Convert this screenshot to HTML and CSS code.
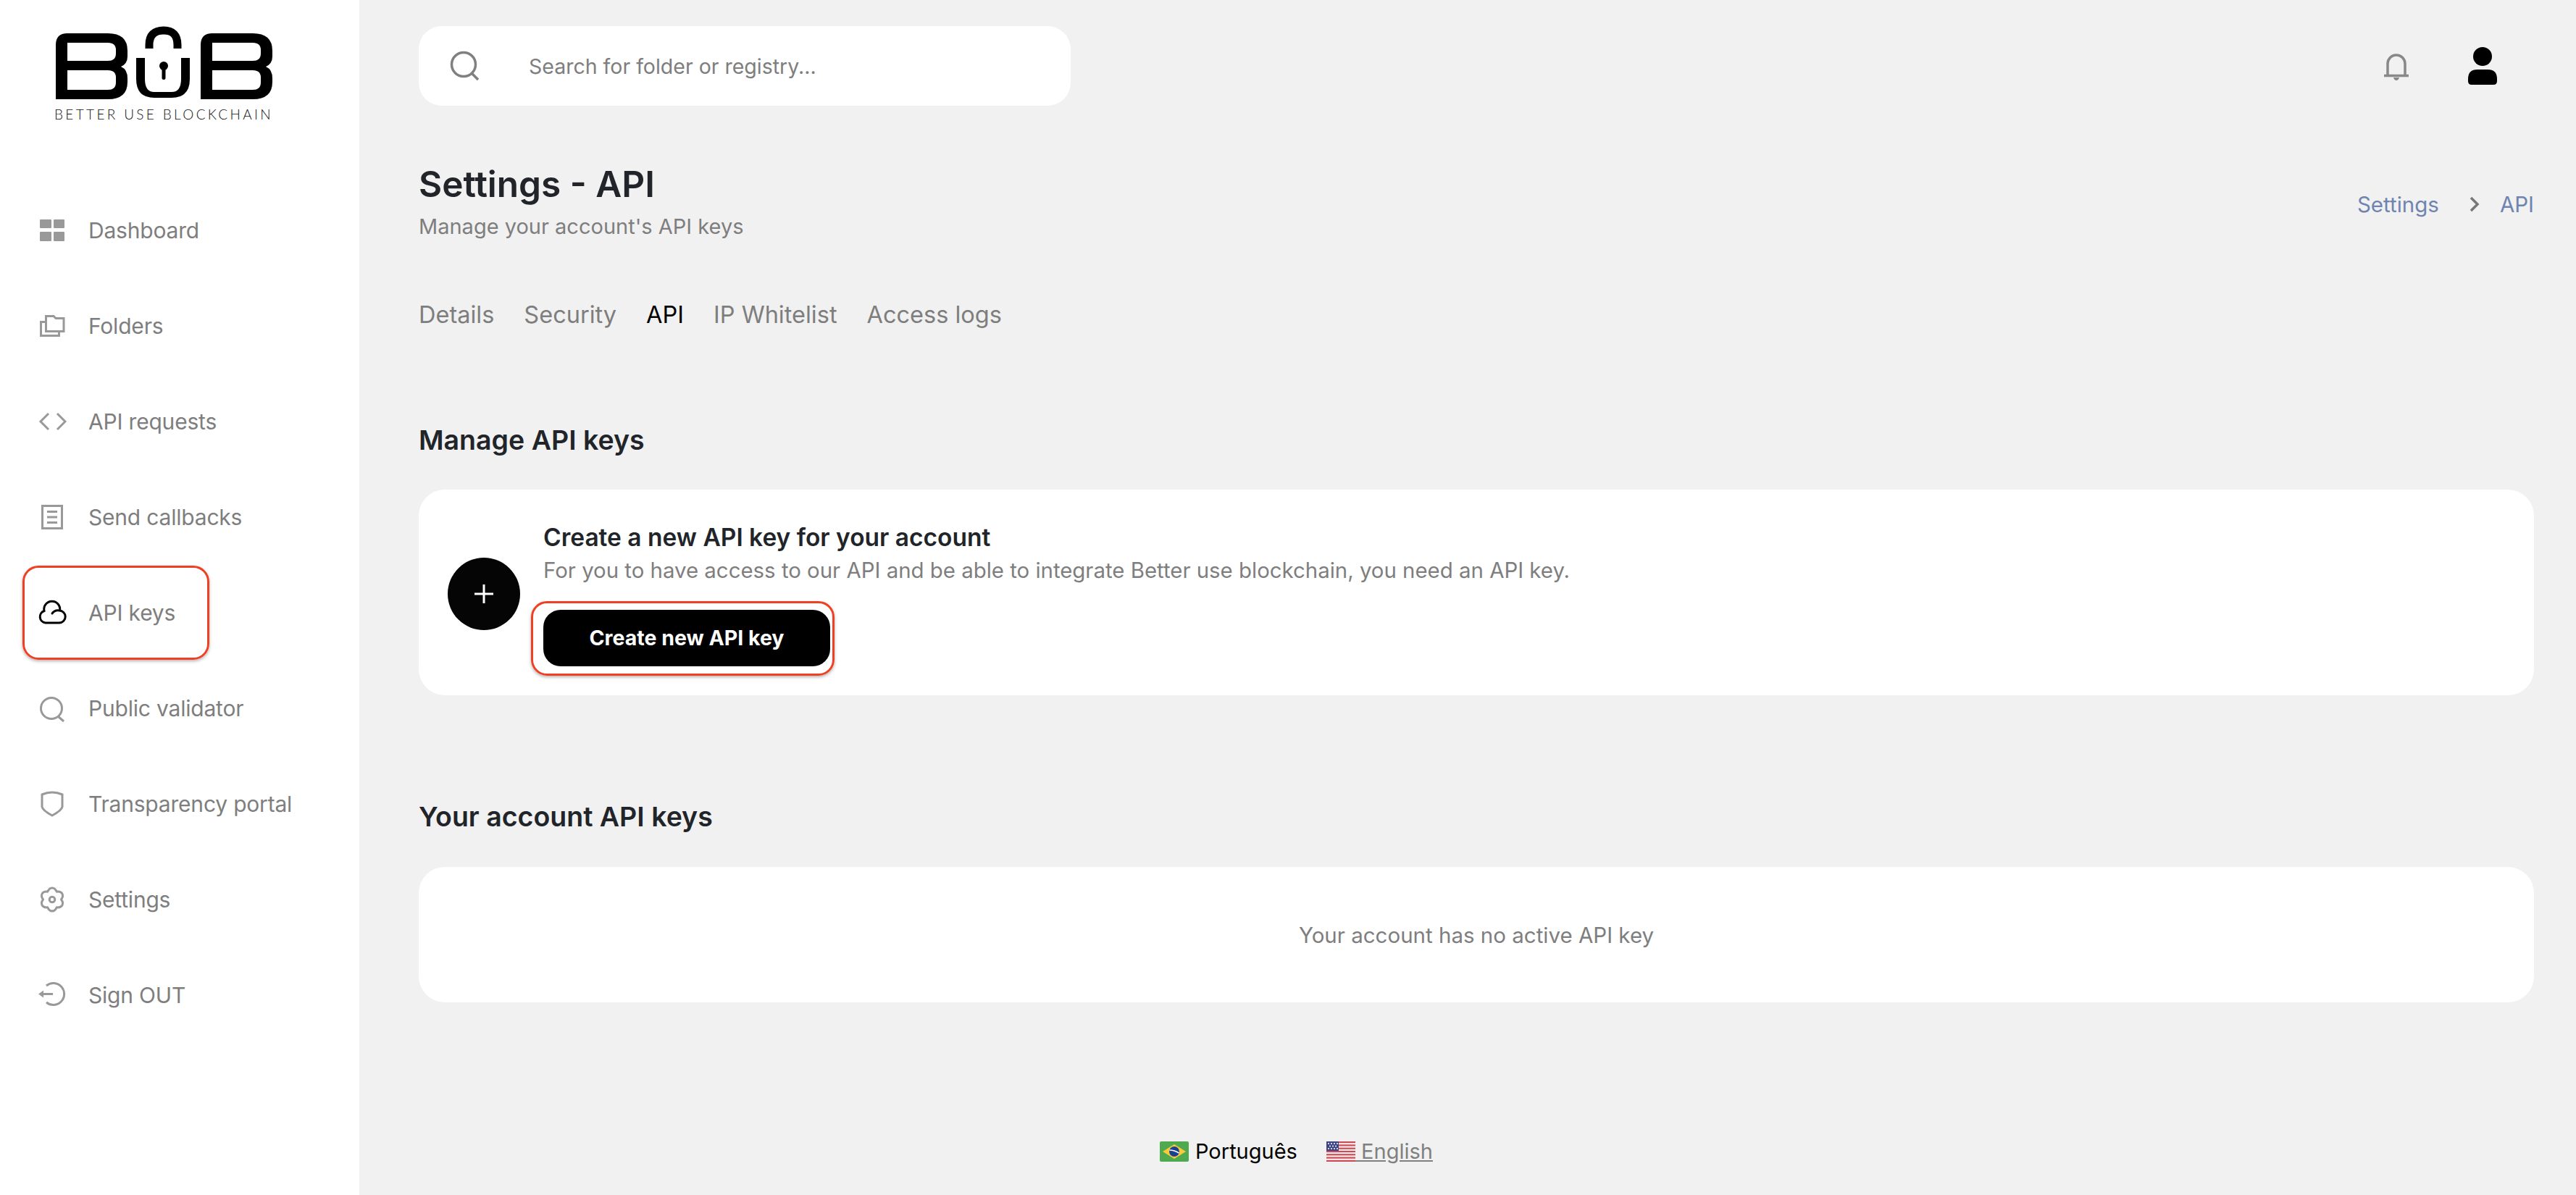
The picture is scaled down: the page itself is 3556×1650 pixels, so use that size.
FILE: index.html
```html
<!DOCTYPE html>
<html lang="en">
<head>
<meta charset="utf-8">
<title>Settings - API</title>
<link rel="stylesheet" href="styles.css">
</head>
<body>
<div class="app">
  <aside class="sidebar">
    <div class="brand">
      <svg class="brand-mark" viewBox="0 0 300 92" width="300" height="92" aria-hidden="true">
        <path fill-rule="evenodd" d="M0 91V16Q0 0 16 0H72Q99 0 99 24V32Q99 42 90 46Q99 50 99 62V67Q99 91 72 91ZM16 13V38H72Q83 38 83 28V23Q83 13 72 13ZM16 51V78H72Q83 78 83 68V61Q83 51 72 51Z"/>
        <path fill-rule="evenodd" transform="translate(200 0)" d="M0 91V16Q0 0 16 0H72Q99 0 99 24V32Q99 42 90 46Q99 50 99 62V67Q99 91 72 91ZM16 13V38H72Q83 38 83 28V23Q83 13 72 13ZM16 51V78H72Q83 78 83 68V61Q83 51 72 51Z"/>
        <path fill="none" stroke="#000" stroke-width="11" d="M129 21V16Q129 -4 149 -4Q168 -4 168 16V21"/>
        <path d="M111 34H123V63Q123 81 136 81H160Q173 81 173 63V34H185V63Q185 89 160 89H136Q111 89 111 63Z"/>
        <circle cx="149" cy="45" r="6"/>
        <rect x="146.500" y="45" width="5" height="19" rx="2.500"/>
      </svg>
      <span class="brand-tag">BETTER USE BLOCKCHAIN</span>
    </div>
    <nav class="nav">
      <a class="nav-item">
        <svg class="nav-icon" viewBox="0 0 40 40"><g class="fill"><rect x="3" y="5" width="16" height="12" rx="1"/><rect x="22" y="5" width="15" height="12" rx="1"/><rect x="3" y="22" width="16" height="13" rx="1"/><rect x="22" y="22" width="15" height="13" rx="1"/></g></svg>
        <span>Dashboard</span>
      </a>
      <a class="nav-item">
        <svg class="nav-icon" viewBox="0 0 40 40"><path d="M11.500 27.500V6.500H22L25 9.500H36V27.500Z"/><path d="M11 14.500H4.500V33.500H29.500V27"/></svg>
        <span>Folders</span>
      </a>
      <a class="nav-item">
        <svg class="nav-icon" viewBox="0 0 40 40"><path d="M15 9L4 20L15 31M27 9L38 20L27 31"/></svg>
        <span>API requests</span>
      </a>
      <a class="nav-item">
        <svg class="nav-icon" viewBox="0 0 40 40"><rect x="6.500" y="4.500" width="27" height="31"/><path d="M13 12.500H27M13 20H27M13 27.500H27"/></svg>
        <span>Send callbacks</span>
      </a>
      <a class="nav-item nav-item-marked">
        <svg class="nav-icon nav-icon-active" viewBox="0 0 40 40"><path d="M20 21A10 10 0 0 1 29.700 17A8.500 8.500 0 0 1 29.700 34H10.700A8.500 8.500 0 0 1 9 17.500A11 11 0 1 1 30.600 17"/></svg>
        <span>API keys</span>
      </a>
      <a class="nav-item">
        <svg class="nav-icon" viewBox="0 0 40 40"><circle cx="19" cy="20" r="14.500"/><path d="M28 31L36 38"/></svg>
        <span>Public validator</span>
      </a>
      <a class="nav-item">
        <svg class="nav-icon" viewBox="0 0 40 40"><path d="M6 7Q20 1 34 7V24Q33 29 20 36Q7 29 6 24Z"/></svg>
        <span>Transparency portal</span>
      </a>
      <a class="nav-item">
        <svg class="nav-icon nav-icon-round" viewBox="0 0 40 40"><path d="M13.750 9.200Q16 4 20 4Q24 4 26.250 9.200Q31.860 8.540 33.860 12Q35.860 15.460 32.500 20Q35.860 24.540 33.860 28Q31.860 31.460 26.250 30.800Q24 36 20 36Q16 36 13.750 30.800Q8.140 31.460 6.140 28Q4.140 24.540 7.500 20Q4.140 15.460 6.140 12Q8.140 8.540 13.750 9.200Z"/><circle cx="20" cy="20" r="3.800"/></svg>
        <span>Settings</span>
      </a>
      <a class="nav-item">
        <svg class="nav-icon" viewBox="0 0 40 40"><path d="M12 7A15 15 0 1 1 12 30M7 18.500H21"/><path class="fill" d="M1 18.500L8 13.500V23.500Z"/></svg>
        <span>Sign OUT</span>
      </a>
    </nav>
  </aside>

  <main class="main">
    <header class="topbar">
      <div class="search">
        <svg class="search-icon" viewBox="0 0 44 44"><circle cx="20" cy="20" r="16.500"/><path d="M31 32L40 41"/></svg>
        <span class="search-text">Search for folder or registry...</span>
      </div>
      <div class="top-actions">
        <svg class="bell" viewBox="0 0 36 38"><path d="M6 31V15A12 12 0 0 1 30 15V31M1 31.500H35"/><path class="bell-clapper" d="M14 34H22Q21 38 18 38Q15 38 14 34Z"/></svg>
        <svg class="user" viewBox="0 0 42 52"><circle cx="21" cy="13" r="13"/><path d="M14 31H28Q41 31 41 44V47Q41 52 36 52H6Q1 52 1 47V44Q1 31 14 31Z"/></svg>
      </div>
    </header>

    <section class="page-head">
      <div>
        <h1 class="page-title">Settings - API</h1>
        <p class="page-sub">Manage your account's API keys</p>
      </div>
      <div class="crumbs">
        <span>Settings</span>
        <svg class="crumb-sep" viewBox="0 0 14 22"><path d="M2 2L11 11L2 20"/></svg>
        <span>API</span>
      </div>
    </section>

    <nav class="tabs">
      <a class="tab">Details</a>
      <a class="tab">Security</a>
      <a class="tab tab-active">API</a>
      <a class="tab">IP Whitelist</a>
      <a class="tab">Access logs</a>
    </nav>

    <h2 class="section-title section-first">Manage API keys</h2>
    <section class="card card-create">
      <div class="plus-badge"><svg viewBox="0 0 28 28" width="28" height="28"><path d="M14 1V27M1 14H27"/></svg></div>
      <div class="create-body">
        <h3 class="create-title">Create a new API key for your account</h3>
        <p class="create-desc">For you to have access to our API and be able to integrate Better use blockchain, you need an API key.</p>
        <div class="btn-wrap"><button class="btn">Create new API key</button></div>
      </div>
    </section>

    <h2 class="section-title section-second">Your account API keys</h2>
    <section class="card card-empty">Your account has no active API key</section>

    <footer class="langs">
      <a class="lang lang-current">
        <svg class="flag" viewBox="0 0 40 28"><rect width="40" height="28" rx="2" fill="#4fa94f"/><path d="M20 4L36 14L20 24L4 14Z" fill="#f6cb3c"/><circle cx="20" cy="14" r="7" fill="#1d3f8f"/><path d="M13.500 12Q20 12 26.500 16" stroke="#fff" stroke-width="1.500" fill="none"/></svg>
        Português
      </a>
      <a class="lang lang-other">
        <svg class="flag" viewBox="0 0 40 28"><rect width="40" height="28" rx="2" fill="#f4f4f4"/><g fill="#cf4a55"><rect y="0" width="40" height="2.200"/><rect y="4.300" width="40" height="2.200"/><rect y="8.600" width="40" height="2.200"/><rect y="12.900" width="40" height="2.200"/><rect y="17.200" width="40" height="2.200"/><rect y="21.500" width="40" height="2.200"/><rect y="25.800" width="40" height="2.200"/></g><rect width="17" height="13" fill="#3d4583"/><g fill="#fff"><circle cx="3" cy="3" r="1"/><circle cx="7" cy="3" r="1"/><circle cx="11" cy="3" r="1"/><circle cx="15" cy="3" r="1"/><circle cx="5" cy="6.500" r="1"/><circle cx="9" cy="6.500" r="1"/><circle cx="13" cy="6.500" r="1"/><circle cx="3" cy="10" r="1"/><circle cx="7" cy="10" r="1"/><circle cx="11" cy="10" r="1"/><circle cx="15" cy="10" r="1"/></g></svg>
        <span class="lang-link">&nbsp;English</span>
      </a>
    </footer>
  </main>
</div>
</body>
</html>
```
FILE: styles.css
```css
*, *::after { box-sizing: border-box; }
html, body { margin: 0; padding: 0; }
body {
  background: #f1f1f1;
  color: #7e7e7e;
  font-family: "Inter", "Open Sans", sans-serif;
  font-size: 30px;
}
h1, h2, h3, p { margin: 0; }

.app { display: flex; min-height: 1650px; }

.sidebar { width: 496px; flex: none; background: #fff; }
.brand { height: 252px; padding: 46px 0 0 77px; display: flex; flex-direction: column; }
.brand-mark { display: block; overflow: visible; }
.brand-tag {
  margin-top: 8px;
  margin-left: -2px;
  font-family: "Lato", sans-serif;
  font-weight: 300;
  font-size: 19px;
  line-height: 24px;
  letter-spacing: 3.350px;
  color: #111;
  white-space: nowrap;
}

.nav { display: flex; flex-direction: column; }
.nav-item {
  position: relative;
  height: 132px;
  padding-left: 52px;
  display: flex;
  align-items: center;
  gap: 30px;
  line-height: 44px;
  letter-spacing: -0.2px;
  color: #7e7e7e;
}
.nav-icon {
  width: 40px;
  height: 40px;
  flex: none;
  fill: none;
  stroke: #999;
  stroke-width: 3;
}
.nav-icon .fill { fill: #999; stroke: none; }
.nav-icon-active { stroke: #000; stroke-linecap: round; }
.nav-icon-round { stroke-linejoin: round; }
.nav-item-marked::after {
  content: "";
  position: absolute;
  left: 31px;
  top: 1px;
  width: 258px;
  height: 130px;
  border: 3px solid #ef4023;
  border-radius: 22px;
  box-shadow: 0 2px 4px rgba(0, 0, 0, .3);
}

.main { flex: 1; min-width: 0; padding: 0 58px 0 82px; }

.topbar { padding-top: 36px; display: flex; justify-content: space-between; align-items: flex-start; }
.search {
  width: 900px;
  height: 110px;
  background: #fff;
  border-radius: 32px;
  display: flex;
  align-items: center;
  padding-left: 42px;
}
.search-icon { width: 44px; height: 44px; fill: none; stroke: #808080; stroke-width: 3.500; flex: none; }
.search-text { margin-left: 66px; font-size: 28.500px; color: #7e7e7e; }

.top-actions { display: flex; align-items: flex-start; padding-right: 50px; padding-top: 29px; gap: 80px; }
.bell { width: 36px; height: 38px; margin-top: 8px; fill: none; stroke: #888; stroke-width: 3.500; overflow: visible; }
.bell .bell-clapper { fill: #888; stroke: none; }
.user { width: 42px; height: 52px; fill: #000; }

.page-head {
  margin-top: 78px;
  display: flex;
  justify-content: space-between;
  align-items: flex-start;
}
.page-title { font-size: 49.500px; line-height: 60px; font-weight: 600; color: #212529; }
.page-sub { margin-top: 7px; font-size: 29px; line-height: 44px; color: #7e7e7e; }
.crumbs {
  margin-top: 36px;
  display: flex;
  align-items: center;
  font-size: 29.500px;
  line-height: 44px;
  color: #6f84b0;
}
.crumb-sep { width: 14px; height: 22px; margin: 0 28px 0 42px; fill: none; stroke: #777; stroke-width: 3.500; }

.tabs { margin-top: 78px; display: flex; gap: 41px; font-size: 32.500px; line-height: 44px; }
.tab { color: #7e7e7e; }
.tab-active { color: #000; }

.section-title { font-size: 37.500px; line-height: 50px; font-weight: 600; color: #212529; }
.section-first { margin-top: 126px; }
.section-second { margin-top: 143px; }

.card { margin-top: 43px; background: #fff; border-radius: 36px; }
.card-create { height: 284px; padding: 44px 0 40px 40px; display: flex; align-items: center; gap: 32px; }
.plus-badge {
  width: 100px;
  height: 100px;
  flex: none;
  border-radius: 50%;
  background: #050505;
  display: flex;
  align-items: center;
  justify-content: center;
}
.plus-badge svg { fill: none; stroke: #fff; stroke-width: 3; }
.create-title { font-size: 33.500px; line-height: 44px; font-weight: 600; color: #212529; }
.create-desc { margin-top: 2px; font-size: 29.400px; line-height: 44px; color: #7e7e7e; }
.btn-wrap { position: relative; width: 396px; margin-top: 32px; }
.btn-wrap::after {
  content: "";
  position: absolute;
  left: -17px;
  right: -6px;
  top: -12px;
  bottom: -13px;
  border: 3px solid #ef4023;
  border-radius: 22px;
  box-shadow: 0 2px 4px rgba(0, 0, 0, .3);
}
.btn {
  display: block;
  width: 396px;
  height: 78px;
  border: 0;
  border-radius: 24px;
  background: #000;
  color: #fff;
  font: 700 28.500px/44px "Inter", "Open Sans", sans-serif;
}

.card-empty {
  height: 187px;
  margin-top: 44px;
  display: flex;
  align-items: center;
  justify-content: center;
  font-size: 29.500px;
}

.langs {
  margin-top: 184px;
  display: flex;
  justify-content: flex-start;
  padding-left: 1023px;
  gap: 40px;
  font-size: 29px;
  line-height: 44px;
}
.lang { display: flex; align-items: center; }
.flag { width: 40px; height: 28px; flex: none; }
.lang-current { color: #000; gap: 9px; }
.lang-other { color: #808080; }
.lang-link { text-decoration: underline; }
```
